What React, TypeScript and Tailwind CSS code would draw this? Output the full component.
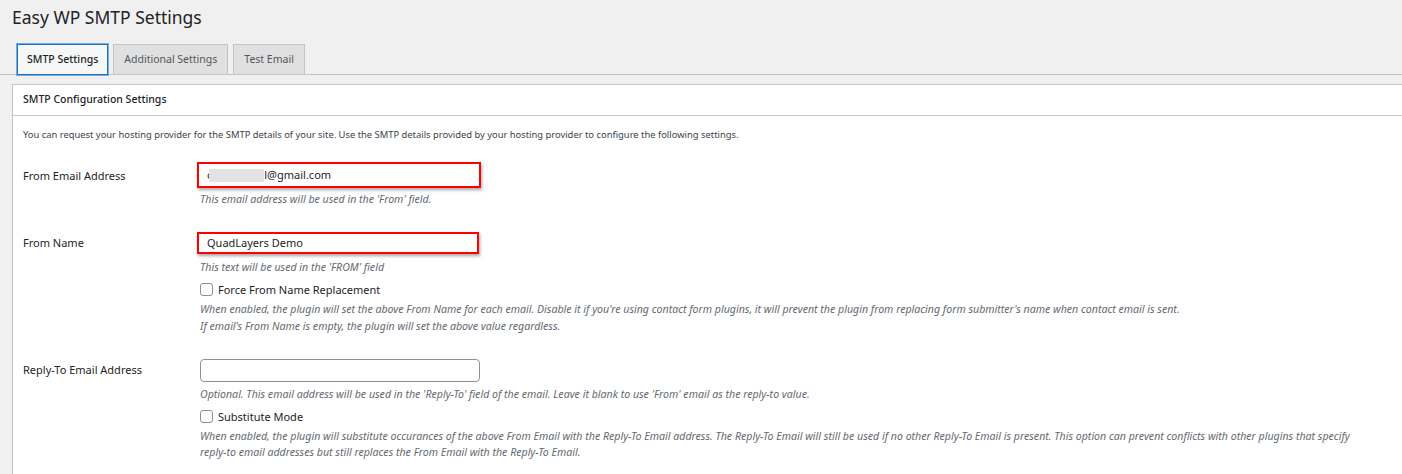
import React from 'react';

const font = { fontFamily: '"Noto Sans", "Open Sans", sans-serif' };

function Tabs() {
    return (
        <div className="flex items-end gap-[5px] border-b border-[#c3c4c7] pl-[17px] h-[31px]">
            <div className="h-[31px] px-[9px] flex items-center border border-[#2271b1] shadow-[0_0_0_1px_#72aee6] bg-[#f6f7f7] text-[10.5px] font-medium text-[#1d2327] -mb-px">
                SMTP Settings
            </div>
            <div className="h-[30px] px-[10px] flex items-center border border-[#c3c4c7] border-b-0 bg-[#e0e0e0] text-[10.5px] text-[#50575e]">
                Additional Settings
            </div>
            <div className="h-[30px] px-[10px] flex items-center border border-[#c3c4c7] border-b-0 bg-[#e0e0e0] text-[10.5px] text-[#50575e]">
                Test Email
            </div>
        </div>
    );
}

function Desc({ children }: { children: React.ReactNode }) {
    return <p className="text-[10.6px] italic text-[#646970] leading-[17px]">{children}</p>;
}

function Checkbox({ label }: { label: string }) {
    return (
        <label className="flex items-center gap-[5px] text-[11px] text-[#1d2327] leading-[17px]">
            <span className="w-[13px] h-[13px] rounded-[3px] border border-[#8c8f94] bg-white" />
            {label}
        </label>
    );
}

export default function App() {
    return (
        <div className="min-h-[474px] bg-[#f0f0f1] pt-[5px] overflow-hidden" style={font}>
            <h1 className="pl-[12px] text-[17.5px] leading-[24px] text-[#1d2327]">Easy WP SMTP Settings</h1>
            <div className="mt-[15px]">
                <Tabs />
            </div>
            <div className="ml-[12px] mt-[9px] bg-white border border-[#c3c4c7] border-r-0">
                <div className="h-[31px] px-[10px] flex items-center border-b border-[#c3c4c7] text-[10.5px] font-medium text-[#1d2327]">
                    SMTP Configuration Settings
                </div>
                <div className="px-[10px] pt-[12px] pb-[20px]">
                    <p className="text-[9.4px] text-[#3c434a] leading-[14px]">
                        You can request your hosting provider for the SMTP details of your site. Use the SMTP details provided by your hosting provider to configure the following settings.
                    </p>

                    {/* From Email */}
                    <div className="flex mt-[20px]">
                        <div className="w-[177px] pt-[6px] text-[11px] text-[#1d2327]">From Email Address</div>
                        <div>
                            <div className="w-[284px] h-[26px] -ml-[3px] border-2 border-[#ff0000] shadow-[1px_2px_3px_rgba(0,0,0,0.35)] bg-white flex items-center pl-[8px] text-[11px] text-[#1d2327]">
                                <span>c</span>
                                <span className="w-[55px] h-[13px] bg-[#e3e3e3] -ml-[3px]" />
                                <span>l@gmail.com</span>
                            </div>
                            <div className="mt-[3px]">
                                <Desc>This email address will be used in the 'From' field.</Desc>
                            </div>
                        </div>
                    </div>

                    {/* From Name */}
                    <div className="flex mt-[24px]">
                        <div className="w-[177px] pt-[3px] text-[11px] text-[#1d2327]">From Name</div>
                        <div>
                            <div className="w-[282px] h-[22px] -ml-[3px] border-2 border-[#ff0000] shadow-[1px_2px_3px_rgba(0,0,0,0.35)] bg-white flex items-center pl-[8px] text-[11px] text-[#1d2327]">
                                QuadLayers Demo
                            </div>
                            <div className="mt-[5px]">
                                <Desc>This text will be used in the 'FROM' field</Desc>
                            </div>
                            <div className="mt-[5px]">
                                <Checkbox label="Force From Name Replacement" />
                            </div>
                            <div className="mt-[3px]">
                                <Desc>
                                    When enabled, the plugin will set the above From Name for each email. Disable it if you're using contact form plugins, it will prevent the plugin from replacing form submitter's name when contact email is sent.
                                </Desc>
                                <Desc>If email's From Name is empty, the plugin will set the above value regardless.</Desc>
                            </div>
                        </div>
                    </div>

                    {/* Reply-To */}
                    <div className="flex mt-[24px]">
                        <div className="w-[177px] pt-[3px] text-[11px] text-[#1d2327]">Reply-To Email Address</div>
                        <div>
                            <div className="w-[280px] h-[23px] rounded-[4px] border border-[#8c8f94] bg-white" />
                            <div className="mt-[4px]">
                                <Desc>Optional. This email address will be used in the 'Reply-To' field of the email. Leave it blank to use 'From' email as the reply-to value.</Desc>
                            </div>
                            <div className="mt-[5px]">
                                <Checkbox label="Substitute Mode" />
                            </div>
                            <div className="mt-[3px] max-w-[1170px] [&>p]:leading-[16px]">
                                <Desc>
                                    When enabled, the plugin will substitute occurances of the above From Email with the Reply-To Email address. The Reply-To Email will still be used if no other Reply-To Email is present. This option can prevent conflicts with other plugins that specify reply-to email addresses but still replaces the From Email with the Reply-To Email.
                                </Desc>
                            </div>
                        </div>
                    </div>
                </div>
            </div>
        </div>
    );
}
